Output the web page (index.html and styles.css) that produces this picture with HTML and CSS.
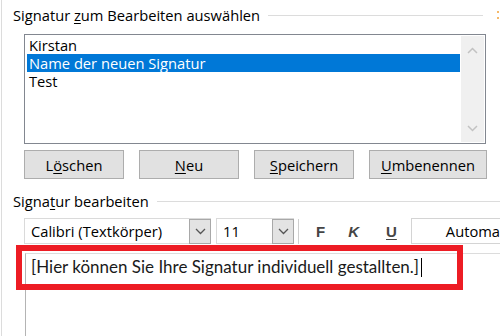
FILE: index.html
```html
<!DOCTYPE html>
<html lang="de">
<head>
    <meta charset="UTF-8">
    <meta name="viewport" content="width=device-width, initial-scale=1.0">
    <title>Signaturen</title>
    <link rel="stylesheet" href="styles.css">
</head>
<body>
<div class="dialog">
    <!-- Signatur auswählen -->
    <div class="group-head">
        <span class="legend">Signatur <u>z</u>um Bearbeiten auswählen</span>
        <span class="rule"></span>
        <span class="cut-mark"></span>
    </div>

    <div class="listbox">
        <ul class="items">
            <li>Kirstan</li>
            <li class="selected">Name der neuen Signatur</li>
            <li>Test</li>
        </ul>
        <div class="scrollbar">
            <svg width="11" height="7" viewBox="0 0 11 7"><path d="M1 6 L5.5 1.5 L10 6" fill="none" stroke="#c2c2c2" stroke-width="1.5"/></svg>
            <svg width="11" height="7" viewBox="0 0 11 7"><path d="M1 1 L5.5 5.5 L10 1" fill="none" stroke="#c2c2c2" stroke-width="1.5"/></svg>
        </div>
    </div>

    <div class="buttons">
        <button class="btn">L<u>ö</u>schen</button>
        <button class="btn"><u>N</u>eu</button>
        <button class="btn"><u>S</u>peichern</button>
        <button class="btn btn-wide"><u>U</u>mbenennen</button>
    </div>

    <!-- Signatur bearbeiten -->
    <div class="group-head second">
        <span class="legend">Signa<u>t</u>ur bearbeiten</span>
        <span class="rule"></span>
    </div>

    <div class="toolbar">
        <div class="combo font-combo">
            <span class="combo-text">Calibri (Textkörper)</span>
            <span class="drop"><svg width="11" height="7" viewBox="0 0 11 7"><path d="M1 1 L5.5 5.5 L10 1" fill="none" stroke="#555" stroke-width="1.3"/></svg></span>
        </div>
        <div class="combo size-combo">
            <span class="combo-text">11</span>
            <span class="drop"><svg width="11" height="7" viewBox="0 0 11 7"><path d="M1 1 L5.5 5.5 L10 1" fill="none" stroke="#555" stroke-width="1.3"/></svg></span>
        </div>
        <span class="sep"></span>
        <span class="fmt fmt-bold">F</span>
        <span class="fmt fmt-italic">K</span>
        <span class="fmt fmt-under">U</span>
        <div class="color-box"><span class="color-text">Automa</span></div>
    </div>

    <div class="editor">
        <p>[Hier können Sie Ihre Signatur individuell gestallten.]<span class="caret"></span></p>
    </div>

    <!-- Markierung -->
    <div class="highlight"></div>
</div>
</body>
</html>
```

FILE: styles.css
```css
* {
    box-sizing: border-box;
    margin: 0;
    padding: 0;
}

body {
    width: 500px;
    height: 336px;
    overflow: hidden;
    background: #ffffff;
    font-family: "Open Sans", "Noto Sans", sans-serif;
    font-size: 14.7px;
    color: #000000;
}

.dialog {
    position: relative;
    height: 336px;
    margin-left: 1px;
    border-left: 1px solid #dcdcdc;
    display: flex;
    flex-direction: column;
}

u {
    text-underline-offset: 2px;
}

/* Gruppenüberschrift */
.group-head {
    display: flex;
    align-items: center;
    height: 20px;
    margin-top: 5px;
    padding-left: 11px;
}

.group-head .rule {
    flex: 1;
    height: 1px;
    background: #dcdcdc;
    margin: 1px 14px 0 8px;
}

.group-head .cut-mark {
    width: 2px;
    height: 8px;
    margin-right: 1px;
    border-top: 2px solid #f5b96a;
    border-bottom: 2px solid #f5b96a;
}

.group-head.second {
    margin-top: 12px;
}

.group-head.second .rule {
    margin-right: 0;
}

/* Liste */
.listbox {
    display: flex;
    width: 462px;
    height: 110px;
    margin: 9px 0 0 22px;
    border: 1px solid #828790;
}

.items {
    flex: 1;
    list-style: none;
    padding: 1px 0 0 2px;
}

.items li {
    height: 18px;
    line-height: 18px;
    padding-left: 2px;
    white-space: nowrap;
}

.items li.selected {
    background: #0078d7;
    color: #ffffff;
}

.scrollbar {
    width: 23px;
    margin: 1px;
    background: #f0f0f0;
    display: flex;
    flex-direction: column;
    justify-content: space-between;
    align-items: center;
    padding: 11px 0 10px;
}

/* Schaltflächen */
.buttons {
    display: flex;
    gap: 15px;
    margin: 6px 0 0 22px;
}

.btn {
    width: 100px;
    height: 29px;
    background: #e1e1e1;
    border: 1px solid #adadad;
    font-family: inherit;
    font-size: 14.7px;
    color: #000000;
}

.btn-wide {
    width: 118px;
}

/* Symbolleiste */
.toolbar {
    display: flex;
    align-items: center;
    height: 26px;
    margin: 7px 0 0 22px;
}

.combo {
    display: flex;
    height: 26px;
    border: 1px solid #dadada;
    background: #ffffff;
}

.combo-text {
    flex: 1;
    padding-left: 6px;
    line-height: 24px;
    white-space: nowrap;
}

.font-combo {
    width: 187px;
}

.size-combo {
    width: 78px;
    margin-left: 5px;
}

.drop {
    width: 22px;
    margin: 0 -1px -1px 0;
    background: #e3e3e3;
    border: 1px solid #a8a8a8;
    display: flex;
    align-items: center;
    justify-content: center;
}

.sep {
    width: 1px;
    height: 25px;
    background: #cfcfcf;
    margin-left: 4px;
}

.fmt {
    font-family: "Liberation Sans", Arial, sans-serif;
    font-weight: bold;
    font-size: 15px;
    color: #454545;
}

.fmt-bold {
    margin-left: 17px;
}

.fmt-italic {
    font-style: italic;
    margin-left: 23px;
}

.fmt-under {
    text-decoration: underline;
    text-underline-offset: 2px;
    margin-left: 27px;
}

.color-box {
    flex: 1;
    height: 26px;
    margin-left: 14px;
    border: 1px solid #d4d4d4;
    border-right: none;
    padding-left: 34px;
    line-height: 24px;
    white-space: nowrap;
    overflow: hidden;
}

/* Editor */
.editor {
    flex: 1;
    margin: 9px 0 0 23px;
    border-left: 1px solid #b4b4b4;
    border-top: 1px solid #dcdcdc;
    padding: 3px 0 0 5px;
}

.editor p {
    font-family: Lato, "Liberation Sans", sans-serif;
    font-size: 17px;
    line-height: 20px;
    white-space: nowrap;
    color: #1a1a1a;
}

.caret {
    display: inline-block;
    width: 1px;
    height: 19px;
    margin-left: 2px;
    background: #000000;
    vertical-align: -4px;
}

.highlight {
    position: absolute;
    left: 14px;
    top: 245px;
    width: 447px;
    height: 45px;
    border: 6px solid #ed1c24;
}
```
